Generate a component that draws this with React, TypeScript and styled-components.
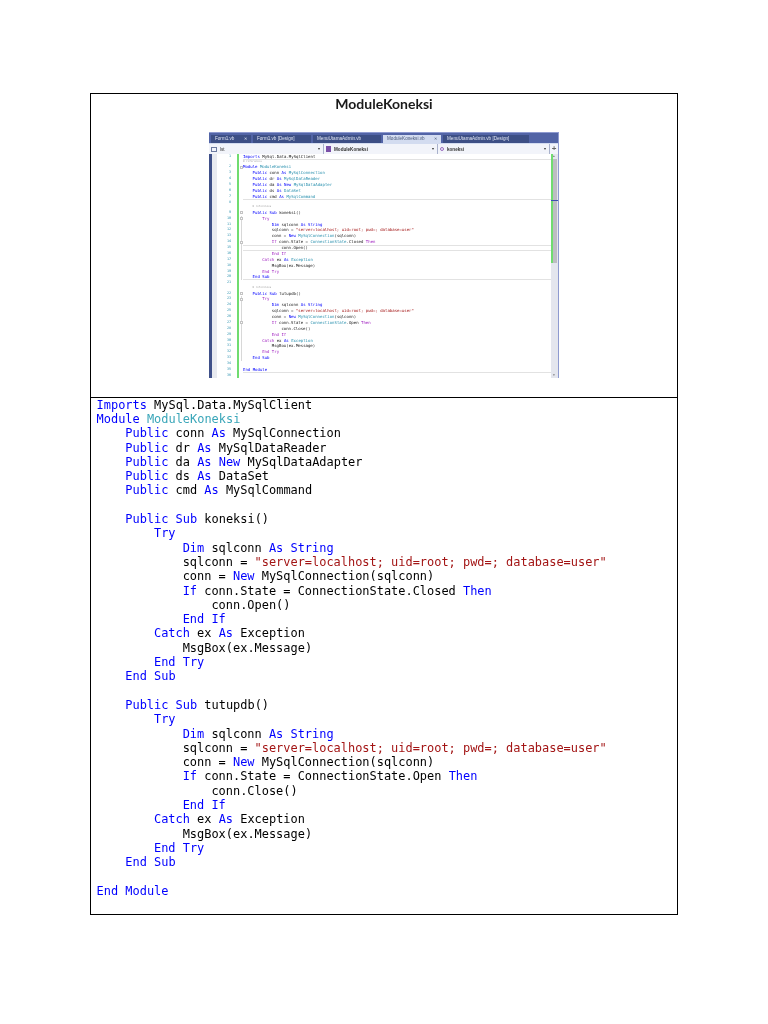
import styled, { createGlobalStyle } from "styled-components";

type TokenKind = "plain" | "keyword" | "control" | "type" | "string" | "module";

const keywords = ["Imports", "Module", "Public", "As", "New", "Sub", "Dim", "String", "End"];
const controls = ["Try", "If", "Then", "Catch"];
const typeNames = [
  "ModuleKoneksi",
  "MySqlConnection",
  "MySqlDataReader",
  "MySqlDataAdapter",
  "DataSet",
  "MySqlCommand",
  "Exception",
  "ConnectionState",
];

const code: [number, string][] = [
  [0, "Imports MySql.Data.MySqlClient"],
  [0, "Module ModuleKoneksi"],
  [1, "Public conn As MySqlConnection"],
  [1, "Public dr As MySqlDataReader"],
  [1, "Public da As New MySqlDataAdapter"],
  [1, "Public ds As DataSet"],
  [1, "Public cmd As MySqlCommand"],
  [0, ""],
  [1, "Public Sub koneksi()"],
  [2, "Try"],
  [3, "Dim sqlconn As String"],
  [3, 'sqlconn = "server=localhost; uid=root; pwd=; database=user"'],
  [3, "conn = New MySqlConnection(sqlconn)"],
  [3, "If conn.State = ConnectionState.Closed Then"],
  [4, "conn.Open()"],
  [3, "End If"],
  [2, "Catch ex As Exception"],
  [3, "MsgBox(ex.Message)"],
  [2, "End Try"],
  [1, "End Sub"],
  [0, ""],
  [1, "Public Sub tutupdb()"],
  [2, "Try"],
  [3, "Dim sqlconn As String"],
  [3, 'sqlconn = "server=localhost; uid=root; pwd=; database=user"'],
  [3, "conn = New MySqlConnection(sqlconn)"],
  [3, "If conn.State = ConnectionState.Open Then"],
  [4, "conn.Close()"],
  [3, "End If"],
  [2, "Catch ex As Exception"],
  [3, "MsgBox(ex.Message)"],
  [2, "End Try"],
  [1, "End Sub"],
  [0, ""],
  [0, "End Module"],
];

const ideTabs = [
  { label: "Form1.vb", width: 40, extra: "✕" },
  { label: "Form1.vb [Design]", width: 58 },
  { label: "MenuUtamaAdmin.vb", width: 68 },
  { label: "ModuleKoneksi.vb", width: 58, active: true, extra: "✕" },
  { label: "MenuUtamaAdmin.vb [Design]", width: 86 },
];

// rows with a "0 references" row above them, and rows closed off by a method line
const lensBefore = [2, 9, 22];
const separatorAt = [1, 7, 20, 35];
const foldAt = [2, 9, 10, 14, 22, 23, 27];

function tokenize(text: string) {
  return text.split(/(".*?"|\w+)/).filter((part) => part !== "");
}

function listingKind(part: string): TokenKind {
  if (part.startsWith('"')) return "string";
  if (part === "ModuleKoneksi") return "module";
  if (keywords.includes(part) || controls.includes(part)) return "keyword";
  return "plain";
}

function ideKind(part: string, text: string): TokenKind {
  if (part.startsWith('"')) return "string";
  if (part === "End" && /End (If|Try)/.test(text)) return "control";
  if (controls.includes(part)) return "control";
  if (keywords.includes(part)) return "keyword";
  if (typeNames.includes(part)) return "type";
  return "plain";
}

export default function App() {
  return (
    <Page>
      <GlobalStyle />
      <Sheet>
        <Heading>
          <Title>ModuleKoneksi</Title>
          <Ide>
            <TabBar>
              {ideTabs.map((tab) => (
                <IdeTab key={tab.label} $active={tab.active} style={{ width: tab.width }}>
                  {tab.label}
                  {tab.extra && <TabMark>{tab.extra}</TabMark>}
                </IdeTab>
              ))}
            </TabBar>
            <DropdownRow>
              <Dropdown>
                <ProjectIcon />
                lst
                <Caret />
              </Dropdown>
              <Dropdown $strong>
                <ModuleIcon />
                ModuleKoneksi
                <Caret />
              </Dropdown>
              <Dropdown $strong>
                <MethodIcon />
                koneksi
                <Caret />
              </Dropdown>
              <SplitButton>+</SplitButton>
            </DropdownRow>
            <EditorBody>
              <Margin />
              <Editor>
                {[...code, [0, ""] as [number, string]].map(([indent, text], index) => {
                  const number = index + 1;
                  return (
                    <div key={index}>
                      {lensBefore.includes(number) && (
                        <LensRow $indent={number === 2 ? 0 : 1}>0 references</LensRow>
                      )}
                      <IdeRow>
                        <LineNumber>{number}</LineNumber>
                        <FoldSlot $rail={(number > 9 && number < 21) || (number > 22 && number < 34)}>
                          {foldAt.includes(number) && <FoldBox />}
                        </FoldSlot>
                        <IdeCode
                          $indent={indent}
                          $separator={separatorAt.includes(number)}
                          $current={number === 15}
                        >
                          {tokenize(text).map((part, i) => (
                            <IdeToken key={i} $kind={ideKind(part, text)}>
                              {part}
                            </IdeToken>
                          ))}
                        </IdeCode>
                      </IdeRow>
                    </div>
                  );
                })}
              </Editor>
              <ScrollBar>
                <ScrollThumb />
                <ScrollMark />
                <ScrollArrow $at="top">▲</ScrollArrow>
                <ScrollArrow $at="bottom">▼</ScrollArrow>
              </ScrollBar>
            </EditorBody>
          </Ide>
        </Heading>
        <Listing>
          {code.map(([indent, text], index) => (
            <ListingLine key={index} $indent={indent}>
              {tokenize(text).map((part, i) => (
                <ListingToken key={i} $kind={listingKind(part)}>
                  {part}
                </ListingToken>
              ))}
            </ListingLine>
          ))}
        </Listing>
      </Sheet>
    </Page>
  );
}

const GlobalStyle = createGlobalStyle`
  html, body {
    margin: 0;
    padding: 0;
    background: #ffffff;
  }
`;

const Page = styled.div`
  width: 768px;
  height: 1024px;
  box-sizing: border-box;
  padding: 93px 0 0 90px;
  overflow: hidden;
  background: #ffffff;
`;

const Sheet = styled.div`
  width: 588px;
  height: 822px;
  box-sizing: border-box;
  border: 1px solid #000000;
  display: flex;
  flex-direction: column;
`;

const Heading = styled.div`
  height: 304px;
  flex: none;
  display: flex;
  flex-direction: column;
  align-items: center;
  border-bottom: 1px solid #000000;
  box-sizing: border-box;
`;

const Title = styled.h1`
  margin: 0;
  height: 38px;
  font-family: "Lato", sans-serif;
  font-size: 14px;
  line-height: 19px;
  font-weight: 700;
  color: #1a1a1a;
  filter: blur(0.25px);
`;

const Ide = styled.div`
  width: 350px;
  height: 246px;
  display: flex;
  flex-direction: column;
  overflow: hidden;
  background: #4d5f9c;
  border-top: 1px solid #8e9ad0;
  border-right: 1px solid #8e9ad0;
  box-sizing: border-box;
  filter: blur(0.4px);
  font-family: "DejaVu Sans Mono", monospace;
`;

const TabBar = styled.div`
  height: 10px;
  flex: none;
  display: flex;
  align-items: flex-end;
  gap: 2px;
  padding: 0 0 0 2px;
  background: #5264a6;
`;

const IdeTab = styled.div<{ $active?: boolean }>`
  height: 8px;
  box-sizing: border-box;
  padding-left: 4px;
  display: flex;
  justify-content: space-between;
  overflow: hidden;
  white-space: nowrap;
  font-family: "Liberation Sans", sans-serif;
  font-size: 4.6px;
  line-height: 8px;
  color: ${(p) => (p.$active ? "#4a5a7a" : "#dfe4f2")};
  background: ${(p) => (p.$active ? "#d3dcf0" : "#3d4f85")};
`;

const TabMark = styled.span`
  padding-right: 4px;
  font-size: 3.6px;
`;

const DropdownRow = styled.div`
  height: 11px;
  flex: none;
  display: grid;
  grid-template-columns: 115px 114px 112px 8px;
  background: #f2f4fa;
  border-top: 1px solid #d3dcf0;
  box-sizing: border-box;
`;

const Dropdown = styled.div<{ $strong?: boolean }>`
  position: relative;
  display: flex;
  align-items: center;
  gap: 3px;
  padding-left: 2px;
  border-right: 1px solid #a9b2cc;
  font-family: "Liberation Sans", sans-serif;
  font-size: 4.6px;
  font-weight: ${(p) => (p.$strong ? 700 : 400)};
  color: #333333;
`;

const SplitButton = styled.div`
  text-align: center;
  font-family: "Liberation Sans", sans-serif;
  font-size: 8px;
  line-height: 9px;
  font-weight: 700;
  color: #666666;
`;

const ProjectIcon = styled.span`
  width: 6px;
  height: 5px;
  border: 1px solid #6c7aa0;
  box-sizing: border-box;
`;

const ModuleIcon = styled.span`
  width: 5px;
  height: 6px;
  background: #7a4fa8;
`;

const MethodIcon = styled.span`
  width: 4px;
  height: 4px;
  border-radius: 50%;
  border: 1px solid #9a6cc0;
  box-sizing: border-box;
`;

const Caret = styled.span`
  position: absolute;
  right: 3px;
  top: 4px;
  border-left: 1.5px solid transparent;
  border-right: 1.5px solid transparent;
  border-top: 2px solid #333333;
`;

const EditorBody = styled.div`
  flex: 1;
  min-height: 0;
  display: flex;
  background: #ffffff;
`;

const Margin = styled.div`
  width: 8px;
  flex: none;
  background: linear-gradient(to right, #3f5089 3px, #e8eaf0 3px);
`;

const Editor = styled.div`
  flex: 1;
  min-width: 0;
  overflow: hidden;
  background: linear-gradient(to right, transparent 20px, #70dc70 20px, #70dc70 22px, transparent 22px);
`;

const LensRow = styled.div<{ $indent: number }>`
  height: 4.4px;
  padding-left: ${(p) => 26 + p.$indent * 9.6}px;
  font-size: 2.6px;
  line-height: 4.4px;
  color: #9a9a9a;
  white-space: nowrap;
`;

const IdeRow = styled.div`
  height: 5.88px;
  display: flex;
  white-space: pre;
  font-size: 4px;
  line-height: 5.88px;
`;

const LineNumber = styled.span`
  width: 14px;
  flex: none;
  text-align: right;
  color: #2b91af;
  font-size: 3.4px;
`;

const FoldSlot = styled.span<{ $rail?: boolean }>`
  width: 3px;
  height: 100%;
  flex: none;
  margin-left: 9px;
  box-sizing: border-box;
  display: flex;
  align-items: center;
  background: ${(p) =>
    p.$rail
      ? "linear-gradient(to right, transparent 1px, #d8d8d8 1px, #d8d8d8 1.6px, transparent 1.6px)"
      : "none"};
`;

const FoldBox = styled.span`
  width: 3px;
  height: 3px;
  box-sizing: border-box;
  border: 0.6px solid #c4c4c4;
  background: #ffffff;
`;

const IdeCode = styled.span<{ $indent: number; $separator?: boolean; $current?: boolean }>`
  flex: 1;
  min-width: 0;
  box-sizing: border-box;
  height: 5.88px;
  padding-left: ${(p) => p.$indent * 9.6}px;
  border-bottom: ${(p) => (p.$separator || p.$current ? "1px solid #e2e2e2" : "none")};
  border-top: ${(p) => (p.$current ? "1px solid #e2e2e2" : "none")};
  line-height: ${(p) => (p.$current ? "3.88px" : "5.88px")};
`;

const tokenColors: Record<TokenKind, string> = {
  plain: "#222222",
  keyword: "#0000ff",
  control: "#a020c0",
  type: "#2b91af",
  string: "#a31515",
  module: "#2b91af",
};

const IdeToken = styled.span<{ $kind: TokenKind }>`
  color: ${(p) => tokenColors[p.$kind]};
`;

const ScrollBar = styled.div`
  position: relative;
  width: 7px;
  flex: none;
  background: #e4e6ee;
`;

const ScrollThumb = styled.div`
  width: 6px;
  height: 109px;
  box-sizing: border-box;
  border-left: 2px solid #70dc70;
  background: linear-gradient(to bottom, #e4e6ee 5px, #bdbdc2 5px);
`;

const ScrollMark = styled.div`
  position: absolute;
  left: 0;
  top: 46px;
  width: 100%;
  height: 1px;
  background: #3d4fb0;
`;

const ScrollArrow = styled.span<{ $at: "top" | "bottom" }>`
  position: absolute;
  left: 2px;
  ${(p) => p.$at}: 1px;
  font-size: 3px;
  line-height: 3px;
  color: #777777;
`;

const Listing = styled.div`
  flex: 1;
  margin-top: -0.3px;
  padding-left: 5.6px;
  font-family: "DejaVu Sans Mono", monospace;
  font-size: 11.95px;
  line-height: 14.3px;
  color: #000000;
  filter: blur(0.2px);
`;

const ListingLine = styled.div<{ $indent: number }>`
  height: 14.3px;
  white-space: pre;
  padding-left: ${(p) => p.$indent * 28.7}px;
`;

const ListingToken = styled.span<{ $kind: TokenKind }>`
  color: ${(p) => (p.$kind === "plain" ? "#000000" : p.$kind === "module" ? "#3aa6b9" : tokenColors[p.$kind])};
`;
